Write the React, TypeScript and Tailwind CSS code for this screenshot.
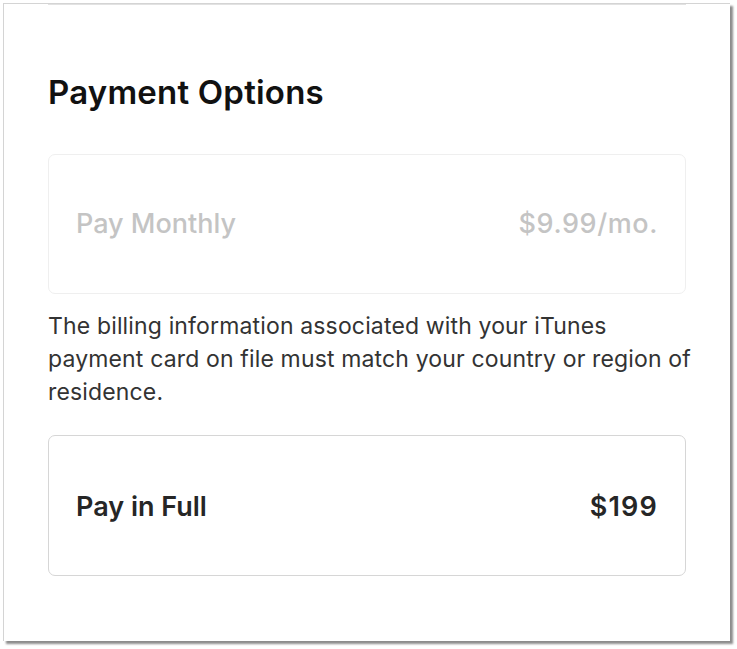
export default function App() {
  return (
    <div className="w-[737px] h-[649px] bg-white pt-[3px] pl-[3px]" style={{ fontFamily: "Inter, 'Noto Sans', sans-serif" }}>
      <div className="w-[727px] h-[638px] bg-white border-l border-t border-[#d4d4d4] shadow-[3px_3px_2px_rgba(0,0,0,0.45)]">
        <div className="mx-[44px] border-t border-[#e2e2e2]" />

        <div className="px-[44px]">
          <h2 className="mt-[67px] text-[33px] leading-[40px] font-semibold text-[#111] tracking-[0.2px]">
            Payment Options
          </h2>

          {/* monthly, disabled */}
          <div className="mt-[42px] h-[140px] rounded-[7px] border border-[#efefef] flex items-center justify-between px-[27px]">
            <span className="text-[27px] font-medium text-[#c4c4c4]">Pay Monthly</span>
            <span className="text-[27px] font-medium text-[#c4c4c4] tracking-[0.6px]">$9.99/mo.</span>
          </div>

          <p className="mt-[16px] w-[680px] text-[23px] leading-[33px] text-[#333] tracking-[0.15px]">
            The billing information associated with your iTunes
            <br />
            payment card on file must match your country or region of
            <br />
            residence.
          </p>

          {/* full */}
          <div className="mt-[26px] h-[141px] rounded-[7px] border border-[#d6d6d6] flex items-center justify-between px-[27px] pt-[3px]">
            <span className="text-[27px] font-semibold text-[#262626]">Pay in Full</span>
            <span className="text-[27px] font-semibold text-[#262626] tracking-[1.2px]">$199</span>
          </div>
        </div>
      </div>
    </div>
  );
}
